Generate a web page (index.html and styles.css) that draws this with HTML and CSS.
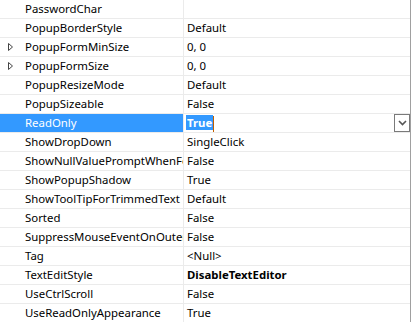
FILE: index.html
```html
<!DOCTYPE html>
<html lang="en">
  <head>
    <meta charset="UTF-8" />
    <title>Properties</title>
    <link rel="stylesheet" href="styles.css">
  </head>
  <body>
    <div class="grid">
      <div class="row"><div class="name">PasswordChar</div><div class="value"></div></div>
      <div class="row"><div class="name">PopupBorderStyle</div><div class="value">Default</div></div>
      <div class="row">
        <div class="name">
          <svg class="expand" width="7" height="10" viewBox="0 0 7 10"><path d="M1.5 1.5 L5.5 5 L1.5 8.5 Z" fill="none" stroke="#444" stroke-width="1"/></svg>PopupFormMinSize
        </div>
        <div class="value">0, 0</div>
      </div>
      <div class="row">
        <div class="name">
          <svg class="expand" width="7" height="10" viewBox="0 0 7 10"><path d="M1.5 1.5 L5.5 5 L1.5 8.5 Z" fill="none" stroke="#444" stroke-width="1"/></svg>PopupFormSize
        </div>
        <div class="value">0, 0</div>
      </div>
      <div class="row"><div class="name">PopupResizeMode</div><div class="value">Default</div></div>
      <div class="row"><div class="name">PopupSizeable</div><div class="value">False</div></div>
      <div class="row selected">
        <div class="name">ReadOnly</div>
        <div class="value editor">
          <span class="sel-text">True</span><span class="caret"></span>
          <span class="drop-btn">
            <svg width="9" height="6" viewBox="0 0 9 6"><path d="M1 1 L4.5 4.5 L8 1" fill="none" stroke="#555" stroke-width="1.6"/></svg>
          </span>
        </div>
      </div>
      <div class="row"><div class="name">ShowDropDown</div><div class="value">SingleClick</div></div>
      <div class="row"><div class="name">ShowNullValuePromptWhenFocused</div><div class="value">False</div></div>
      <div class="row"><div class="name">ShowPopupShadow</div><div class="value">True</div></div>
      <div class="row"><div class="name">ShowToolTipForTrimmedText</div><div class="value">Default</div></div>
      <div class="row"><div class="name">Sorted</div><div class="value">False</div></div>
      <div class="row"><div class="name">SuppressMouseEventOnOuterMouseClick</div><div class="value">False</div></div>
      <div class="row"><div class="name">Tag</div><div class="value">&lt;Null&gt;</div></div>
      <div class="row"><div class="name">TextEditStyle</div><div class="value bold">DisableTextEditor</div></div>
      <div class="row"><div class="name">UseCtrlScroll</div><div class="value">False</div></div>
      <div class="row"><div class="name">UseReadOnlyAppearance</div><div class="value">True</div></div>
    </div>
  </body>
</html>
```

FILE: styles.css
```css
body {
  margin: 0;
  padding: 0;
  background: #fff;
  font-family: "Noto Sans", "Segoe UI", sans-serif;
  font-size: 11.4px;
  color: #000;
  overflow: hidden;
}
.grid {
  width: 410px;
  height: 322px;
  border-right: 1px solid #a0a0a0;
  overflow: hidden;
}
.row {
  display: flex;
  height: 18px;
  border-bottom: 1px solid #ebebeb;
  line-height: 18px;
}
.name {
  position: relative;
  width: 158px;
  padding-left: 25px;
  border-right: 1px solid #ebebeb;
  white-space: nowrap;
  overflow: hidden;
}
.value {
  flex: 1;
  padding-left: 3px;
  white-space: nowrap;
  overflow: hidden;
}
.bold {
  font-weight: bold;
}
.expand {
  position: absolute;
  left: 7px;
  top: 4px;
}
.selected .name {
  background: #3399ff;
  color: #fff;
}
.editor {
  position: relative;
  padding-left: 2px;
}
.sel-text {
  background: #3399ff;
  color: #fff;
  font-weight: bold;
  padding: 0 1px;
}
.caret {
  display: inline-block;
  width: 1px;
  height: 16px;
  background: #c06000;
  vertical-align: middle;
}
.drop-btn {
  position: absolute;
  right: 0;
  top: 0;
  width: 14px;
  height: 16px;
  border: 1px solid #7a7a7a;
  background: #fff;
  display: flex;
  align-items: center;
  justify-content: center;
}
```
